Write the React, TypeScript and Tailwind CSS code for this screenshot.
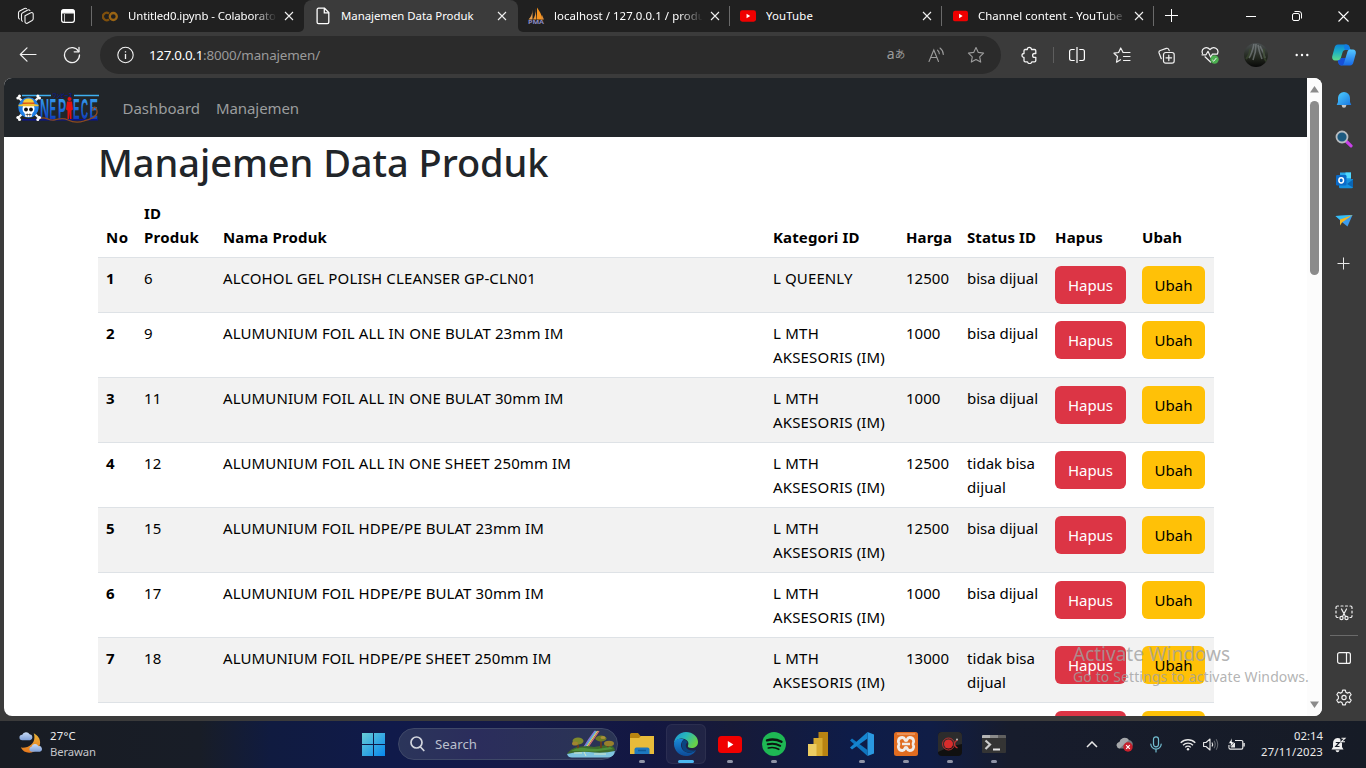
import { useLayoutEffect, useRef, useState, type ReactNode } from "react";

const FONT = "font-['Noto_Sans','Open_Sans',sans-serif]";

/* Single line of text whose tracking is adjusted to fill a given width. */
function Fit({ w, children, className = "" }: { w: number; children: string; className?: string }) {
  const ref = useRef<HTMLSpanElement>(null);
  const [ls, setLs] = useState(0);
  useLayoutEffect(() => {
    if (ref.current) {
      const natural = ref.current.getBoundingClientRect().width;
      setLs((w - natural) / children.length);
    }
  }, []);
  return (
    <span ref={ref} className={`inline-block whitespace-nowrap ${className}`} style={{ letterSpacing: `${ls}px` }}>
      {children}
    </span>
  );
}

function Cell({ w, children }: { w: string; children?: ReactNode }) {
  return <div className={`flex h-full shrink-0 items-center justify-center ${w}`}>{children}</div>;
}

function X() {
  return (
    <svg width="10" height="10" viewBox="0 0 10 10" stroke="#f0f0f0" strokeWidth="1.1">
      <path d="M1 1l8 8M9 1L1 9" />
    </svg>
  );
}

function YouTube({ w, h }: { w: number; h: number }) {
  return (
    <svg width={w} height={h} viewBox="0 0 24 17">
      <rect width="24" height="17" rx="3.5" fill="#f00000" />
      <path d="M9.8 5v7l5.6-3.5z" fill="#fff" />
    </svg>
  );
}

function Tab({ icon, title, w, fade, active, sep }: { icon: ReactNode; title: string; w: number; fade?: boolean; active?: boolean; sep?: boolean }) {
  return (
    <div className={`flex h-8 shrink-0 items-center ${active ? "w-[214px] rounded-t-lg bg-[#3b3b3b] pl-[11px]" : "w-[212px] pl-[10px]"}`}>
      <div className="flex w-4 shrink-0 items-center justify-center">{icon}</div>
      <div className={`ml-[10px] w-[148px] shrink-0 overflow-hidden text-[11.4px] leading-5 text-white ${fade ? "[mask-image:linear-gradient(to_right,black_125px,transparent_149px)]" : ""}`}>
        <Fit w={w}>{title}</Fit>
      </div>
      <div className="ml-[5px] flex w-4 shrink-0 items-center justify-center">
        <X />
      </div>
      {sep && <div className="ml-[6px] h-5 w-px shrink-0 bg-[#6a6a6a]" />}
    </div>
  );
}

function PageIcon() {
  return (
    <svg width="14" height="18" viewBox="0 0 14 18" fill="none" stroke="#fff" strokeWidth="1.3">
      <path d="M2.5 1.2h6L12.8 5.600v9.700a1.400 1.400 0 0 1-1.400 1.400h-8.900a1.400 1.400 0 0 1-1.400-1.400V2.600a1.400 1.400 0 0 1 1.400-1.400z" />
      <path d="M8.300 1.400v4.400h4.400" />
    </svg>
  );
}

function PmaIcon() {
  return (
    <svg className="shrink-0" width="18" height="18" viewBox="0 0 18 18">
      <path d="M5.500 2.500C5.500 7 4 10 1.500 12.500h4z" fill="#e8a050" />
      <path d="M8.500 1C9 6 8 9.500 6 12.500h3.500z" fill="#f0962e" />
      <path d="M10 0.500c2 3 5 7 5.500 12H10z" fill="#f7941e" />
      <path d="M15 8l2 4.500h-3z" fill="#d98b3a" />
      <text x="9" y="17.300" fontSize="5.500" fontWeight="700" textAnchor="middle" textLength="16" lengthAdjust="spacingAndGlyphs" fill="#8c8cc4" fontFamily="Noto Sans">PMA</text>
    </svg>
  );
}

function TabStrip() {
  return (
    <div className="flex h-8 bg-[#3b3b3b]">
      <div className="flex h-8 w-[304px] shrink-0 items-center rounded-br-[5px] bg-[#202020]">
        <Cell w="w-[52px]">
          <svg width="18" height="18" viewBox="0 0 18 18" fill="none" stroke="#f0f0f0" strokeWidth="1.1" strokeLinejoin="round" strokeLinecap="round">
            <path d="M8 8.800l5.800-3a1.500 1.500 0 0 1 2.400 1.200v4.800c0 .8-.4 1.400-1.100 1.800l-4.800 2.600A1.600 1.600 0 0 1 8 14.800z" />
            <path d="M5.500 14.200q-1-.3-1-1.500V7.500c0-.8.400-1.400 1.200-1.800l5.100-2.700c.9-.4 1.600-.2 2.100.5" />
            <path d="M2.500 12q-1-.3-1-1.500V5.700c0-.8.400-1.400 1.200-1.800l4.800-2.500c.9-.4 1.500-.2 2 .3" />
          </svg>
        </Cell>
        <Cell w="w-[32px]">
          <svg width="14" height="14" viewBox="0 0 14 14" fill="none" stroke="#fff" strokeWidth="1.200">
            <rect x=".6" y=".6" width="12.800" height="12.800" rx="2.300" />
            <path d="M1 2.300Q1 1 2.300 1h9.400Q13 1 13 2.300V3.800H1z" fill="#fff" />
            <path d="M3.500 5v8" strokeWidth=".7" />
          </svg>
        </Cell>
        <div className="ml-[7px] h-5 w-px bg-[#6a6a6a]" />
        <Tab
          icon={
            <svg width="16" height="11" viewBox="0 0 16 11" fill="none" strokeWidth="2.300">
              <path d="M7 2.600a3.700 3.700 0 1 0 0 5.800" stroke="#80500c" />
              <circle cx="11.300" cy="5.500" r="3.500" stroke="#996414" />
            </svg>
          }
          title="Untitled0.ipynb - Colaboratory"
          w={158}
          fade
        />
      </div>
      <div className="flex h-8 shrink-0 bg-[#202020]">
        <Tab icon={<PageIcon />} title="Manajemen Data Produk" w={132.500} active />
      </div>
      <div className="flex h-8 min-w-0 flex-1 rounded-bl-[5px] bg-[#202020]">
        <Tab icon={<PmaIcon />} title="localhost / 127.0.0.1 / produk" w={157} fade sep />
        <Tab icon={<YouTube w={16} h={12} />} title="YouTube" w={47} sep />
        <Tab icon={<YouTube w={15} h={12} />} title="Channel content - YouTube" w={144.500} fade sep />
        <Cell w="w-[35px]">
          <svg width="14" height="14" viewBox="0 0 14 14" stroke="#fff" strokeWidth="1">
            <path d="M6.500 0v13M0 6.500h13" />
          </svg>
        </Cell>
        <div className="flex-1" />
        <Cell w="w-[46px]">
          <svg width="10" height="10" viewBox="0 0 10 10" stroke="#fff" strokeWidth="1">
            <path d="M0 5.500h10" />
          </svg>
        </Cell>
        <Cell w="w-[46px]">
          <svg width="10" height="10" viewBox="0 0 10 10" fill="none" stroke="#fff" strokeWidth="1">
            <rect x=".5" y="2.500" width="7" height="7" rx="1.500" />
            <path d="M2.500.5h4.500a2.500 2.500 0 0 1 2.500 2.500v4.500" />
          </svg>
        </Cell>
        <Cell w="w-[46px]">
          <svg width="11" height="11" viewBox="0 0 11 11" stroke="#fff" strokeWidth="1.100">
            <path d="M.5.5l10 10M10.500.5l-10 10" />
          </svg>
        </Cell>
      </div>
    </div>
  );
}

const STAR = "M9 1.500l2.300 4.900 5.300.7-3.900 3.700 1 5.300L9 13.500l-4.700 2.600 1-5.300L1.400 7.100l5.300-.7z";

function Toolbar() {
  return (
    <div className="flex h-[46px] items-center bg-[#3b3b3b] pl-[6px]">
      <Cell w="w-[44px]">
        <svg width="18" height="16" viewBox="0 0 18 16" fill="none" stroke="#f2f2f2" strokeWidth="1.200" strokeLinecap="round" strokeLinejoin="round">
          <path d="M17 7.500H1.500M8 .8L1.300 7.500 8 14.200" />
        </svg>
      </Cell>
      <Cell w="w-[44px]">
        <svg width="18" height="18" viewBox="0 0 18 18" fill="none" stroke="#f2f2f2" strokeWidth="1.300" strokeLinecap="round" strokeLinejoin="round">
          <path d="M16.500 9A7.500 7.500 0 1 1 15.600 5.500" />
          <path d="M16 1.300v4.500h-4.800" />
        </svg>
      </Cell>
      <div className="ml-[6px] flex h-[38px] w-[901px] shrink-0 items-center rounded-full bg-[#2b2b2b] pl-[14px]">
        <Cell w="w-[24px]">
          <svg width="18" height="18" viewBox="0 0 18 18" fill="none" stroke="#f2f2f2" strokeWidth="1.100">
            <circle cx="8.500" cy="9" r="7.700" />
            <path d="M8.500 8v5M8.500 5.200v1.300" strokeWidth="1.300" />
          </svg>
        </Cell>
        <div className="ml-[11px] flex flex-1 text-[13.400px] leading-5 text-[#9a9a9a]">
          <Fit w={54} className="text-white">127.0.0.1</Fit>
          <Fit w={117}>:8000/manajemen/</Fit>
        </div>
        <Cell w="w-[40px]">
          <span className="flex items-center pb-[2px] text-[#9c9c9c]">
            <span className="text-[14px] leading-none">a</span>
            <span className="mt-px font-['Noto_Sans_CJK_JP',sans-serif] text-[10.500px] leading-none">あ</span>
          </span>
        </Cell>
        <Cell w="w-[40px]">
          <svg width="17" height="17" viewBox="0 0 17 17" fill="none" stroke="#9c9c9c" strokeWidth="1.100" strokeLinecap="round">
            <path d="M1 14.500L5.800 3l4.700 11.500M2.800 10.500h6" />
            <path d="M9.600 3.200q1.600 1.300 1.700 3.500M12 1q3.200 2.400 3.300 6.500" />
          </svg>
        </Cell>
        <Cell w="w-[40px]">
          <svg width="18" height="18" viewBox="0 0 18 18" fill="none" stroke="#9c9c9c" strokeWidth="1.100" strokeLinejoin="round">
            <path d={STAR} />
          </svg>
        </Cell>
        <div className="w-[5px]" />
      </div>
      <div className="w-[7px]" />
      <Cell w="w-[44px]">
        <svg width="18" height="18" viewBox="0 0 18 18" fill="none" stroke="#f2f2f2" strokeWidth="1.300" strokeLinejoin="round">
          <path d="M4 3.500h2.300a2 2 0 1 1 4.200 0h3a1.300 1.300 0 0 1 1.300 1.300v2.700h-1.300a1.900 1.900 0 1 0 0 3.800h1.300v3.200a1.300 1.300 0 0 1-1.300 1.300h-2.700a2.200 2.200 0 0 1-4.300 0H4.300A1.300 1.300 0 0 1 3 14.500v-3a2 2 0 1 1 0-4V4.800a1.300 1.300 0 0 1 1-1.300z" />
        </svg>
      </Cell>
      <div className="mx-px h-4 w-px shrink-0 bg-[#5e5e5e]" />
      <Cell w="w-[44px]">
        <svg width="16" height="16" viewBox="0 0 16 16" fill="none" stroke="#fff" strokeWidth="1.200">
          <path d="M5.700 2.500H2.500A1.900 1.900 0 0 0 .6 4.400v7.200a1.900 1.900 0 0 0 1.900 1.900h3.200M10.300 2.500h3.200a1.900 1.900 0 0 1 1.900 1.900v7.200a1.900 1.900 0 0 1-1.900 1.900h-3.200M8 0v16" />
        </svg>
      </Cell>
      <Cell w="w-[45px]">
        <svg width="18" height="17" viewBox="0 0 18 17" fill="none" stroke="#f2f2f2" strokeWidth="1.200" strokeLinejoin="round" strokeLinecap="round">
          <path d="M10 5.300L7.700 1 5.600 5.500 1 6.200l3.500 3.300-1 5.700 4-2.500M10 5.500h7M10.500 9.500H17M10.500 13.500H17" />
        </svg>
      </Cell>
      <Cell w="w-[44px]">
        <svg width="17" height="17" viewBox="0 0 17 17" fill="none" stroke="#f2f2f2" strokeWidth="1.200" strokeLinecap="round">
          <rect x="5.500" y="5.500" width="10.700" height="10.700" rx="2.200" />
          <path d="M10.800 8v5.600M8 10.800h5.600" />
          <path d="M3.300 11.700L1.100 6a2 2 0 0 1 1.200-2.500l6-2.100a2 2 0 0 1 2.500 1.200l.4 1" />
        </svg>
      </Cell>
      <Cell w="w-[44px]">
        <svg width="18" height="18" viewBox="0 0 18 18" fill="none" stroke="#f2f2f2" strokeWidth="1.200" strokeLinejoin="round" strokeLinecap="round">
          <path d="M1.500 7.500C-.3 2.700 5.300-.4 9 3.500c3.700-3.900 9.300-.8 7.600 4M4 10.800L9.500 16M1 8.800h4l2-3.500 2.700 6 1.700-3.200h5" />
          <circle cx="13.500" cy="13.500" r="4.200" fill="#4caf50" stroke="none" />
          <path d="M11.700 14.300l1 .9 2.500-3" strokeWidth="1" />
        </svg>
      </Cell>
      <Cell w="w-[48px]">
        <svg width="24" height="24" viewBox="0 0 24 24">
          <defs>
            <clipPath id="av"><circle cx="12" cy="12" r="12" /></clipPath>
            <linearGradient id="avg" x2="0" y2="1">
              <stop offset="0" stopColor="#4a4f51" />
              <stop offset=".6" stopColor="#23281f" />
              <stop offset="1" stopColor="#080808" />
            </linearGradient>
          </defs>
          <g clipPath="url(#av)">
            <path fill="url(#avg)" d="M0 0h24v24H0z" />
            <path d="M10 1c-1 5-2 9-5 14M12 1c0 7-1 11-3 16M14 2c1 6 2 9 4 14M16 3c3 5 4 7 5 12" stroke="#858c8e" fill="none" opacity=".6" strokeWidth="1.600" />
            <path d="M2 16c3-3 4-5 4-10M20 6c0 6-1 9 3 13" stroke="#3a4830" fill="none" strokeWidth="2" opacity=".7" />
          </g>
        </svg>
      </Cell>
      <Cell w="w-[44px]">
        <svg width="14" height="4" viewBox="0 0 14 4" fill="#fff">
          <circle cx="1.700" cy="2" r="1.200" /><circle cx="7" cy="2" r="1.200" /><circle cx="12.300" cy="2" r="1.200" />
        </svg>
      </Cell>
      <Cell w="w-[40px]">
        <svg width="24" height="22" viewBox="0 0 24 22">
          <defs>
            <linearGradient id="cpa" x2="0" y2="1"><stop offset="0" stopColor="#0a84d8" /><stop offset=".5" stopColor="#22b4c0" /><stop offset="1" stopColor="#5fdc8a" /></linearGradient>
            <linearGradient id="cpb" x2="0" y2="1"><stop offset="0" stopColor="#55c8ff" /><stop offset="1" stopColor="#1668e8" /></linearGradient>
          </defs>
          <path d="M6 .5h8c2.300 0 3 1 3.500 2.500l1 3h-5.200c-1.600 0-2.300 1-2.800 2.500L8.800 14c-.6 1.500-1.500 2.500-3 2.500H3c-2.300 0-3.300-2-2.700-4.500L2.500 4C3 2 4 .5 6 .5z" fill="url(#cpa)" />
          <path d="M13 .5c2.500 0 3.800.6 4.500 2.500l1 3h-5.200c-1.500 0-1.500-5.500-.3-5.500z" fill="#127ce4" />
          <path d="M18 21.500h-8c-2.300 0-3-1-3.500-2.500l-.8-2.500c2 0 3-1 3.500-2.500h4.300l2-6.500c.5-1.500 1.500-2 3-2H21c2.300 0 3.300 2 2.700 4.500L21.500 18c-.5 2-1.500 3.500-3.500 3.500z" fill="url(#cpb)" />
          <path d="M5.700 16.500c2 0 3-1 3.500-2.500h4.300l-1.200 4c-.5 1.800-1.200 3.500-3 3.500-1.800-.1-2.400-1.100-2.800-2.500z" fill="#1650d8" />
        </svg>
      </Cell>
    </div>
  );
}

function Logo() {
  return (
    <svg className="mt-px" width="84" height="32" viewBox="0 0 84 32">
      <defs>
        <linearGradient id="lg" x2="0" y2="1">
          <stop offset="0" stopColor="#45b5f5" />
          <stop offset=".55" stopColor="#1a66d8" />
          <stop offset="1" stopColor="#0a1aa0" />
        </linearGradient>
      </defs>
      <path d="M6 3.500h29M58 3.500h25" stroke="#3fb0f0" strokeWidth="1.300" />
      <text x="36.500" y="5" fontSize="5" fontWeight="700" fill="#0a1690" textLength="20" lengthAdjust="spacingAndGlyphs" fontFamily="Noto Sans CJK JP">ワンピース</text>
      <path d="M6 27.700h76" stroke="#0a1490" strokeWidth="1.400" />
      <g fontFamily="Liberation Sans" fontWeight="700" fontSize="29" fill="url(#lg)">
        <text transform="translate(24 27) scale(.44 1)">N</text>
        <text transform="translate(33.500 27) scale(.34 1)">E</text>
        <text transform="translate(42 27) scale(.42 1)">P</text>
        <text transform="translate(57 27) scale(.34 1)">E</text>
        <text transform="translate(65 27) scale(.34 1)">C</text>
        <text transform="translate(73.500 27) scale(.44 1)">E</text>
      </g>
      <circle cx="53.500" cy="7" r="2" fill="#e01010" />
      <path d="M51 9.500h5l1 8-1.500 1V27H54l-.5-7-.5 7h-1.500v-8.500l-1.500-1z" fill="#e01010" />
      <path d="M23 27c6-4 9 2 15 1s8-3 14 0 10 3 16 1 14-4 13-10-5-4-4 0" stroke="#8a4a20" strokeWidth="1.300" fill="none" />
      <path d="M2 5l21 21M23 5L2 26" stroke="#f2f2f2" strokeWidth="2.300" />
      <g fill="#fff">
        <circle cx="1.800" cy="6" r="1.500" /><circle cx="3.500" cy="4" r="1.500" /><circle cx="23.500" cy="6" r="1.500" /><circle cx="21.800" cy="4" r="1.500" />
        <circle cx="1.800" cy="25.500" r="1.500" /><circle cx="3.500" cy="27.500" r="1.500" /><circle cx="23.500" cy="25.500" r="1.500" /><circle cx="21.800" cy="27.500" r="1.500" />
      </g>
      <circle cx="12.500" cy="15.500" r="10.200" fill="#1f7fe8" />
      <path d="M7 14q5.500-2 11 0 1.500 4.500-1.500 7l-1 4h-6l-1-4q-3-2.500-1.500-7z" fill="#fff" />
      <path d="M7 11.500Q7 6.500 12.500 6.500t5.500 5z" fill="#f5cf3a" />
      <path d="M6.500 10.500h12v2h-12z" fill="#d8501a" />
      <path d="M2.500 12.800q10-2 20 0v1.500h-20z" fill="#f0c030" />
      <circle cx="10" cy="17.500" r="1.900" fill="#101010" /><circle cx="15" cy="17.500" r="1.900" fill="#101010" />
      <path d="M9.500 22.500h6M11.300 21.500v3M13.800 21.500v3" stroke="#333" strokeWidth=".7" />
    </svg>
  );
}

type Row = { no: string; id: string; name: string; nw: number; short?: boolean; price: string; unsold?: boolean };
const rows: Row[] = [
  { no: "1", id: "6", name: "ALCOHOL GEL POLISH CLEANSER GP-CLN01", nw: 313, short: true, price: "12500" },
  { no: "2", id: "9", name: "ALUMUNIUM FOIL ALL IN ONE BULAT 23mm IM", nw: 340.500, price: "1000" },
  { no: "3", id: "11", name: "ALUMUNIUM FOIL ALL IN ONE BULAT 30mm IM", nw: 340.500, price: "1000" },
  { no: "4", id: "12", name: "ALUMUNIUM FOIL ALL IN ONE SHEET 250mm IM", nw: 348, price: "12500", unsold: true },
  { no: "5", id: "15", name: "ALUMUNIUM FOIL HDPE/PE BULAT 23mm IM", nw: 321, price: "12500" },
  { no: "6", id: "17", name: "ALUMUNIUM FOIL HDPE/PE BULAT 30mm IM", nw: 321, price: "1000" },
  { no: "7", id: "18", name: "ALUMUNIUM FOIL HDPE/PE SHEET 250mm IM", nw: 328.500, price: "13000", unsold: true },
];

const GRID = "grid w-[1116px] grid-cols-[38px_79px_550px_133px_61px_88px_87px_80px] border-b border-[#dee2e6] *:p-2";

function Buttons() {
  return (
    <>
      <div>
        <button className="flex h-[38px] w-[71px] items-center justify-center rounded-md bg-[#dc3545] text-white"><Fit w={45}>Hapus</Fit></button>
      </div>
      <div>
        <button className="flex h-[38px] w-[63px] items-center justify-center rounded-md bg-[#ffc107] text-black"><Fit w={38}>Ubah</Fit></button>
      </div>
    </>
  );
}

function Page() {
  return (
    <div className="flex h-[638px] w-[1318px] shrink-0 overflow-hidden rounded-lg bg-white">
      <div className="flex w-[1303px] shrink-0 flex-col">
        <nav className="flex h-[59px] shrink-0 items-center bg-[#212529] pl-3 text-[15px] text-[#9b9d9e]">
          <Logo />
          <Fit w={77.500} className="mt-[2px] ml-[22.500px]">Dashboard</Fit>
          <Fit w={83} className="mt-[2px] ml-4">Manajemen</Fit>
        </nav>
        <main className="flex min-h-0 flex-1 flex-col overflow-hidden pl-[94px] text-[15px] leading-6 text-black">
          <h1 className="mb-2 h-12 shrink-0 text-[38px] leading-[50px] font-medium text-[#212529]">
            <Fit w={450.500}>Manajemen Data Produk</Fit>
          </h1>
          <div className={`${GRID} h-[65px] shrink-0 items-end font-bold`}>
            <div><Fit w={22.500}>No</Fit></div>
            <div className="flex flex-col items-start"><Fit w={17}>ID</Fit><Fit w={55}>Produk</Fit></div>
            <div><Fit w={104}>Nama Produk</Fit></div>
            <div><Fit w={86.500}>Kategori ID</Fit></div>
            <div><Fit w={46}>Harga</Fit></div>
            <div><Fit w={69}>Status ID</Fit></div>
            <div><Fit w={48}>Hapus</Fit></div>
            <div><Fit w={40}>Ubah</Fit></div>
          </div>
          {rows.map((r, i) => (
            <div key={r.no} className={`${GRID} shrink-0 ${r.short ? "h-[55px]" : "h-[65px]"} ${i % 2 === 0 ? "bg-[#f2f2f2]" : ""}`}>
              <div className="font-bold">{r.no}</div>
              <div><Fit w={r.id.length * 8.700}>{r.id}</Fit></div>
              <div><Fit w={r.nw}>{r.name}</Fit></div>
              <div className="flex flex-col items-start">
                {r.short ? <Fit w={79.500}>L QUEENLY</Fit> : <><Fit w={46}>L MTH</Fit><Fit w={112}>AKSESORIS (IM)</Fit></>}
              </div>
              <div><Fit w={r.price.length * 8.600}>{r.price}</Fit></div>
              <div className="flex flex-col items-start">
                {r.unsold ? <><Fit w={68}>tidak bisa</Fit><Fit w={39}>dijual</Fit></> : <Fit w={71}>bisa dijual</Fit>}
              </div>
              <Buttons />
            </div>
          ))}
          <div className={`${GRID} h-[65px] shrink-0`}>
            <div /><div /><div /><div /><div /><div />
            <div><div className="h-[38px] w-[71px] rounded-md bg-[#dc3545]" /></div>
            <div><div className="h-[38px] w-[63px] rounded-md bg-[#ffc107]" /></div>
          </div>
        </main>
      </div>
      <div className="flex w-[15px] flex-col items-center bg-[#fcfcfc] pt-2">
        <svg width="9" height="7" viewBox="0 0 9 7"><path d="M4.500 0L9 6.500H0z" fill="#8b8b8b" /></svg>
        <div className="mt-2 h-[174px] w-[9px] rounded-full bg-[#8b8b8b]" />
        <div className="flex-1" />
        <svg className="mb-2" width="9" height="7" viewBox="0 0 9 7"><path d="M4.500 7L9 .5H0z" fill="#8b8b8b" /></svg>
      </div>
    </div>
  );
}

function Sidebar() {
  const c = "flex w-full shrink-0 items-center justify-center";
  return (
    <div className="flex w-11 flex-col items-center">
      <div className={`${c} h-[43px]`}>
        <svg width="16" height="18" viewBox="0 0 16 18">
          <defs><linearGradient id="bl" x2="1" y2="1"><stop offset="0" stopColor="#4fd0ff" /><stop offset="1" stopColor="#1976e0" /></linearGradient></defs>
          <circle cx="8" cy="14.500" r="2.200" fill="#c8c8c8" />
          <path d="M8 1a6 6 0 0 1 6 6v4l1.300 3H.7L2 11V7a6 6 0 0 1 6-6z" fill="url(#bl)" />
        </svg>
      </div>
      <div className={`${c} h-[36px]`}>
        <svg width="18" height="18" viewBox="0 0 18 18">
          <path d="M11.500 11.500l4.500 4.300" stroke="#c840e8" strokeWidth="3.200" strokeLinecap="round" />
          <circle cx="7" cy="7" r="5.500" fill="#1c5a80" stroke="#b8bcc0" strokeWidth="1.800" />
        </svg>
      </div>
      <div className={`${c} h-[46px]`}>
        <svg width="17" height="17" viewBox="0 0 17 17">
          <path d="M4 0.500h11v9H4z" fill="#28a8ea" /><path d="M9.500.5H15V6H9.500z" fill="#50d9ff" />
          <path d="M3 8l14-1v8a1.300 1.300 0 0 1-1.300 1.300H4.300A1.300 1.300 0 0 1 3 15z" fill="#1490df" />
          <path d="M17 7.500l-6 4.500 6 3.500z" fill="#0a65b5" />
          <rect x="0" y="3" width="10.500" height="10.500" rx="1.200" fill="#0a6ac8" />
          <ellipse cx="5.200" cy="8.300" rx="2.300" ry="2.600" fill="none" stroke="#fff" strokeWidth="1.500" />
        </svg>
      </div>
      <div className={`${c} h-[35px]`}>
        <svg width="18" height="14" viewBox="0 0 18 14">
          <path d="M.5 2L17.500 1 12.500 12.500 7.500 8.500z" fill="#3a9cf0" />
          <path d="M.5 2L17.500 1 5 5.500z" fill="#35c0f5" />
          <path d="M17.500 1L5 5.500v6l2-3z" fill="#f5b820" />
        </svg>
      </div>
      <div className={`${c} h-[50px]`}>
        <svg width="14" height="13" viewBox="0 0 14 13" stroke="#e8e8e8" strokeWidth="1"><path d="M6.500.5v12M.5 6.500h12" /></svg>
      </div>
      <div className="flex-1" />
      <div className={`${c} h-[44px]`}>
        <svg width="18" height="16" viewBox="0 0 18 16" fill="none" stroke="#f0f0f0" strokeWidth="1.200" strokeLinecap="round">
          <path d="M1 3.500v-1A1.500 1.500 0 0 1 2.500 1h1M6 1h2M10.500 1h2M15 1h.5A1.500 1.500 0 0 1 17 2.500v1M17 6v2M1 6v2M17 10.500v.5a1.500 1.500 0 0 1-1.500 1.500H15M1 10.500v.5a1.500 1.500 0 0 0 1.500 1.500H3" />
          <path d="M6.500 4l4 7.500M11.500 4l-4 7.500" />
          <circle cx="6.500" cy="13" r="1.600" /><circle cx="11.500" cy="13" r="1.600" />
        </svg>
      </div>
      <div className="h-px w-7 bg-[#6a6a6a]" />
      <div className={`${c} h-[44px]`}>
        <svg width="14" height="12" viewBox="0 0 14 12" fill="none" stroke="#f4f4f4" strokeWidth="1.200"><rect x=".6" y=".6" width="12.800" height="10.800" rx="2" /><path d="M9.500.6v10.800" /></svg>
      </div>
      <div className={`${c} mb-[5px] h-[36px]`}>
        <svg width="18" height="18" viewBox="0 0 17 17" fill="none" stroke="#f0f0f0" strokeWidth="1.100" strokeLinejoin="round">
          <path d="M7.200 1h2.600l.5 2.100 1.400.8 2.100-.8 1.500 2.300L13.800 7v2l1.500 1.600-1.500 2.300-2.100-.8-1.400.8-.5 2.100H7.200l-.5-2.100-1.400-.8-2.100.8-1.500-2.300L3.200 9V7L1.700 5.400l1.500-2.300 2.100.8 1.400-.8z" />
          <circle cx="8.500" cy="8" r="2" />
        </svg>
      </div>
    </div>
  );
}

function TaskApp({ children, dot, active }: { children: ReactNode; dot?: boolean; active?: boolean }) {
  return (
    <div className="flex h-[47px] w-11 shrink-0 flex-col items-center pt-[3px]">
      <div className={`flex h-10 w-10 flex-col items-center rounded-md ${active ? "border border-white/5 bg-white/5 pt-[7px]" : "pt-2"}`}>
        <div className="flex h-6 w-6 shrink-0 items-center justify-center">{children}</div>
        <div className={`mt-[4px] h-[3px] shrink-0 rounded-full ${active ? "w-4 bg-[#4cb8f0]" : dot ? "w-[6px] bg-[#8f94a6]" : "w-0"}`} />
      </div>
    </div>
  );
}

function Taskbar() {
  return (
    <div className="flex h-[47px] items-center bg-[linear-gradient(90deg,#181c23_0px,#181d27_200px,#101b40_270px,#101a4a_390px,#151a48_520px,#131742_650px,#171a38_730px,#0e1c48_850px,#101d46_930px,#171c2c_1010px,#161b26_1366px)]">
      <div className="flex w-[360px] shrink-0 items-center pl-[18px]">
        <svg className="mb-[3px]" width="26" height="24" viewBox="0 0 26 26">
          <defs>
            <linearGradient id="mn" x2="0" y2="1"><stop offset="0" stopColor="#e8b43a" /><stop offset="1" stopColor="#e8781c" /></linearGradient>
            <linearGradient id="cl" x2="0" y2="1"><stop offset="0" stopColor="#c8dcf6" /><stop offset="1" stopColor="#7fa0d8" /></linearGradient>
          </defs>
          <path d="M16 2.500c12 6 7 21-5 21-4 0-7-1.500-9-5.500 10 1 17-6 14-15.500z" fill="url(#mn)" />
          <path d="M3.500 10a3 3 0 0 1 0-6 4.500 4.500 0 0 1 8-.5 3.300 3.300 0 0 1 .5 6.500z" fill="url(#cl)" />
          <path d="M13.500 22.500a2.800 2.800 0 0 1 0-5.500 4 4 0 0 1 7.500-.5 3 3 0 0 1 1.500 6z" fill="url(#cl)" />
        </svg>
        <div className="-mt-px ml-[6px] flex flex-col items-start text-[11.300px] leading-4 text-[#f0f0f0]">
          <Fit w={26}>27°C</Fit>
          <Fit w={46} className="text-[#c4c6ca]">Berawan</Fit>
        </div>
      </div>
      <div className="flex w-[38px] shrink-0 items-center pl-[2px]">
        <svg width="23" height="23" viewBox="0 0 23 23">
          <defs><linearGradient id="wn" x2="1" y2="1"><stop offset="0" stopColor="#68cdd5" /><stop offset="1" stopColor="#0787ee" /></linearGradient></defs>
          <path fill="url(#wn)" d="M0 0h11v11H0zM12 0h11v11H12zM0 12h11v11H0zM12 12h11v11H12z" />
        </svg>
      </div>
      <div className="-mt-px flex h-8 w-[220px] shrink-0 items-center rounded-full border border-[#3f4868] bg-[linear-gradient(90deg,#2b355a,#2b2d5c_35%,#2a3554)] pl-[11px]">
        <svg width="15" height="16" viewBox="0 0 15 16" fill="none" stroke="#d2d5de" strokeWidth="1.700" strokeLinecap="round"><circle cx="6.500" cy="6.500" r="5.500" /><path d="M10.500 11l3.300 3.500" /></svg>
        <div className="ml-[10px] flex-1 text-[13.200px] leading-5 text-[#bcc0ce]"><Fit w={42}>Search</Fit></div>
        <svg className="mr-px" width="50" height="28" viewBox="0 0 50 28">
          <g fill="none" strokeWidth="1.300">
            <path d="M18 17Q23 9 29 1" stroke="#8a70d0" /><path d="M19.300 17Q24.500 9 30.300 1" stroke="#5ab0e8" /><path d="M20.600 17Q26 9 31.600 1" stroke="#e8d860" /><path d="M22 17Q27.500 9 33 1" stroke="#d87078" />
          </g>
          <path d="M1 24q3-5 10-7l10-1 7 1 12-2q8 0 9 5l-4 3H8z" fill="#3d6a2c" />
          <path d="M1 24q12-3 22-2 14 2 26-1-1 6-7 6.500H6q-4 0-5-3.500z" fill="#7fc4e0" />
          <path d="M12 20V12M35 18V9M42 19V13" stroke="#6b3d1c" strokeWidth="1.800" />
          <ellipse cx="12" cy="11" rx="5.500" ry="3.500" fill="#7f8a2c" />
          <ellipse cx="9" cy="13.500" rx="3" ry="2" fill="#a08430" />
          <ellipse cx="35" cy="8.500" rx="5.500" ry="3" fill="#6c7a24" />
          <ellipse cx="37" cy="7.500" rx="2.500" ry="1.500" fill="#a89038" />
          <ellipse cx="43" cy="13.500" rx="5" ry="2.700" fill="#98802c" />
          <path d="M5 21q8-5 17-2.500l10 .5 12-2 3 2-18 2.500z" fill="#4f8f38" />
          <path d="M18 22l2 4M8 23h8M28 24h12" stroke="#e4f0c0" strokeWidth=".8" />
        </svg>
      </div>
      <div className="w-[2px] shrink-0" />
      <TaskApp dot>
        <svg width="24" height="22" viewBox="0 0 24 22">
          <path d="M0 1.500Q0 0 1.500 0H8l2.500 3H24v6H0z" fill="#b88410" />
          <path d="M0 5h9l2-2h13v18H0z" fill="#e8bb3a" />
          <path d="M4.500 21v-4.500q0-2 2-2h11q2 0 2 2V21z" fill="#1d78c0" /><path d="M8 17.500h8" stroke="#105a98" strokeWidth="1.500" />
        </svg>
      </TaskApp>
      <TaskApp active>
        <svg width="24" height="24" viewBox="0 0 24 24">
          <defs>
            <linearGradient id="eg" x2="1" y2=".5"><stop offset="0" stopColor="#1c8fd8" /><stop offset=".5" stopColor="#28b8b8" /><stop offset="1" stopColor="#68d048" /></linearGradient>
            <linearGradient id="eb" x2="0" y2="1"><stop offset="0" stopColor="#1a8ad8" /><stop offset="1" stopColor="#0c4b98" /></linearGradient>
          </defs>
          <path d="M0 12C0 5 5.500 0 12 0s12 4.500 12 10c0 4-3 6-6.500 6-3 0-4-1.200-3.500-2.500C16 9 11 6 7 6.500 3 7 .5 9.500 0 12z" fill="url(#eg)" />
          <path d="M0 12C.5 7 6 5.500 10 7.500 6 10 6 16 10 19c4 3 9 2 12-1-2 4-6 6-10 6C5.500 24 0 18.500 0 12z" fill="url(#eb)" />
          <path d="M10 7.500c-3 2-3 8.500.5 11.500 3.500 2.500 8.500 2 11.500-1-4.500 1.500-9 0-10-3-.6-2 0-3.500 1.500-4.500-1-1.800-2-2.500-3.500-3z" fill="#0a4480" />
        </svg>
      </TaskApp>
      <TaskApp dot><YouTube w={24} h={17} /></TaskApp>
      <TaskApp dot>
        <svg width="24" height="24" viewBox="0 0 24 24" fill="none" stroke="#0b1510" strokeLinecap="round"><circle cx="12" cy="12" r="12" fill="#1eb854" stroke="none" /><path d="M5 8.300q7.500-2.200 14.500 1.500" strokeWidth="2.400" /><path d="M5.700 12.300q6.500-1.800 12.500 1.500" strokeWidth="2" /><path d="M6.300 16q5.500-1.500 10.500 1.300" strokeWidth="1.600" /></svg>
      </TaskApp>
      <TaskApp>
        <svg width="20" height="24" viewBox="0 0 20 24"><path d="M10.500 0H20v24h-9.500z" fill="#b98412" /><path d="M5.500 6h9v18h-9z" fill="#d6aa30" /><path d="M0 12h8.500v12H0z" fill="#eccd62" /></svg>
      </TaskApp>
      <TaskApp dot>
        <svg width="24" height="24" viewBox="0 0 24 24"><path d="M17.500 0L24 2.500v19L17.500 24z" fill="#2a98e0" /><path d="M0 8.500L2 6.500 17.500 18v6z" fill="#0f75bf" /><path d="M0 15.500L17.500 0v6.500L2 17.500z" fill="#1585cf" /></svg>
      </TaskApp>
      <TaskApp dot>
        <svg width="24" height="24" viewBox="0 0 24 24"><rect width="24" height="24" rx="2.500" fill="#e06c20" /><path d="M3 2h18" stroke="#f0a878" strokeWidth="1.200" /><path d="M8.500 5.500c3 0 1.500 3 3.500 3s.5-3 3.500-3c5 0 5 6 2.500 6.500 2.500.5 2.500 6.500-2.500 6.500-3 0-1.500-3-3.500-3s-.5 3-3.500 3c-5 0-5-6-2.500-6.500C3.500 11.500 3.500 5.500 8.500 5.500z" fill="none" stroke="#f0ece8" strokeWidth="2.800" /><path d="M8 12h8" stroke="#f0ece8" strokeWidth="2.500" /></svg>
      </TaskApp>
      <TaskApp dot>
        <svg width="24" height="24" viewBox="0 0 24 24"><rect width="24" height="24" rx="4" fill="#101010" /><path d="M4 0h16q4 0 4 4v8q-12 2-24 8V4q0-4 4-4z" fill="#2c2c2c" /><circle cx="10.500" cy="12" r="4.500" fill="#d82c2c" /><circle cx="10.500" cy="12" r="6" fill="none" stroke="#b83030" /><path d="M19.500 8q-3 1.500-3 4t3 4" stroke="#c03030" strokeWidth="1.300" fill="none" /><circle cx="19" cy="7.500" r=".9" fill="#ccc" /></svg>
      </TaskApp>
      <TaskApp dot>
        <svg width="24" height="18" viewBox="0 0 24 18"><rect width="24" height="18" rx="1" fill="#343434" /><path d="M0 3V1q0-1 1-1h7v3z" fill="#b4b4b4" /><path d="M8 0h8v3H8z" fill="#8a8a8a" /><path d="M16 0h7q1 0 1 1v2h-8z" fill="#606060" /><path d="M3.500 5.500l4.500 4-4.500 4.500" fill="none" stroke="#ccc" strokeWidth="2.200" /><path d="M11 14.500h7" stroke="#e4e4e4" strokeWidth="2" /></svg>
      </TaskApp>
      <div className="flex-1" />
      <Cell w="w-[32px]"><svg width="12" height="7" viewBox="0 0 12 7" fill="none" stroke="#e8e8e8" strokeWidth="1.500"><path d="M1 6l5-5 5 5" /></svg></Cell>
      <Cell w="w-[32px]">
        <svg width="17" height="15" viewBox="0 0 17 15"><path d="M3.500 11.500a3.500 3.500 0 0 1 0-6.500 5 5 0 0 1 8.500-2 4 4 0 0 1 1 8.500z" fill="#77797d" /><path d="M3.500 11.500L13 3q-2-3-6-2-3 1-3.500 4-3 .5-3 3.500.5 2.500 3 3z" fill="#a5a7aa" /><circle cx="12" cy="10" r="4.700" fill="#c8202c" /><path d="M10.200 8.200l3.600 3.600M13.800 8.200l-3.600 3.600" stroke="#fff" strokeWidth="1.200" /></svg>
      </Cell>
      <Cell w="w-[32px]"><svg width="12" height="17" viewBox="0 0 12 17" fill="none" stroke="#72bdd0" strokeWidth="1.200" strokeLinecap="round"><rect x="3.500" y=".8" width="5" height="10" rx="2.500" /><path d="M.8 8a5.200 5.200 0 0 0 10.400 0M6 13.200V16" /></svg></Cell>
      <Cell w="w-[32px]">
        <svg width="16" height="13" viewBox="0 0 16 13" fill="none" stroke="#e8e8e8" strokeWidth="1.300"><path d="M.7 4.800a10.300 10.300 0 0 1 14.600 0M3 7.200a7.100 7.100 0 0 1 10 0M5.200 9.400a4 4 0 0 1 5.600 0" /><circle cx="8" cy="11.200" r="1.200" fill="#e8e8e8" stroke="none" /></svg>
      </Cell>
      <Cell w="w-[14px]">
        <svg className="shrink-0" width="16" height="13" viewBox="0 0 16 13" fill="none" stroke="#e8e8e8" strokeWidth="1.100" strokeLinejoin="round"><path d="M.6 4.500h2.400L7 1v11L3 8.500H.6zM9 4.500q1.200 2 0 4" /><path d="M11 2.800q2.400 3.700 0 7.400M13.200 1.200q3 5.300 0 10.600" stroke="#62666e" /></svg>
      </Cell>
      <Cell w="w-[36px]">
        <svg width="17" height="13" viewBox="0 0 17 13" fill="none" stroke="#e8e8e8" strokeWidth="1.200"><path d="M7 2.500h6.500a1.300 1.300 0 0 1 1.300 1.300v6a1.300 1.300 0 0 1-1.300 1.300H2.300A1.300 1.300 0 0 1 1 9.800V7M16.200 5v3.500" /><path d="M3 5h4v4.500H3z" fill="#e8e8e8" stroke="none" /><path d="M4 0L.5 5.500h2.300L2 9.500 6.500 4H4z" fill="#fff" stroke="#161b26" strokeWidth=".6" /></svg>
      </Cell>
      <div className="-mt-px flex w-[69px] shrink-0 flex-col items-end text-[11.300px] leading-4 text-[#ececec]">
        <Fit w={29}>02:14</Fit>
        <Fit w={62}>27/11/2023</Fit>
      </div>
      <div className="mr-[19px] ml-[8px] flex w-4 shrink-0 items-center">
        <svg width="16" height="16" viewBox="0 0 16 16"><path d="M6.500 1Q2 1.500 2 6.500v3.500L.5 12.500h12L11 10V6.500Q11 1 6.500 1z" fill="#f0f0f0" /><path d="M4.500 13.300h4q-.5 2-2 2t-2-2z" fill="#f0f0f0" /><path d="M4.800 5.500h3.500L4.800 9.500h3.700" fill="none" stroke="#161b26" strokeWidth="1.200" /><path d="M9.500 0h6v5.500h-6z" fill="#161b26" /><path d="M10.500 1.200h3.500l-3.500 3.500H14" fill="none" stroke="#f0f0f0" strokeWidth="1.100" /></svg>
      </div>
    </div>
  );
}

export default function App() {
  return (
    <div className={`relative flex h-[768px] w-[1366px] flex-col overflow-hidden bg-[#3b3b3b] ${FONT}`}>
      <TabStrip />
      <Toolbar />
      <div className="flex h-[643px] shrink-0 pl-1">
        <Page />
        <Sidebar />
      </div>
      <Taskbar />
      <div className="pointer-events-none absolute top-[642px] left-[1073px] flex flex-col items-start text-[#a0a0a0]/80">
        <Fit w={157} className="text-[19px] leading-6">Activate Windows</Fit>
        <Fit w={236} className="text-[14px] leading-[22px]">Go to Settings to activate Windows.</Fit>
      </div>
    </div>
  );
}
